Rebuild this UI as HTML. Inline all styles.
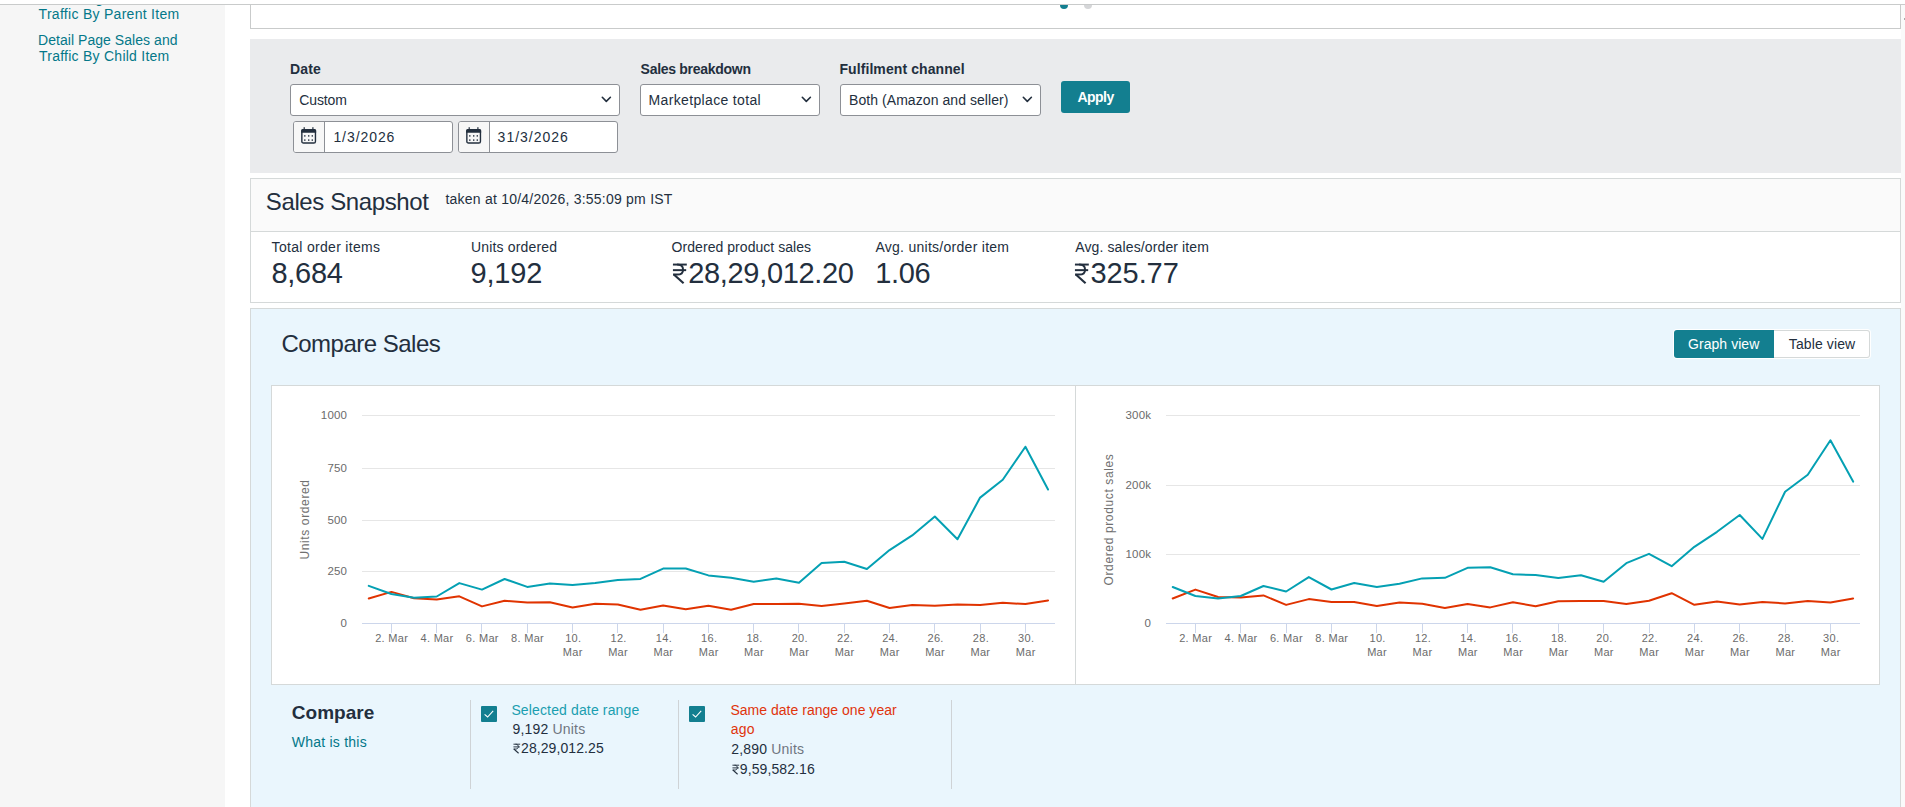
<!DOCTYPE html>
<html><head><meta charset="utf-8"><style>
*{margin:0;padding:0;box-sizing:border-box}
html,body{width:1905px;height:807px;overflow:hidden;background:#fff;font-family:"Liberation Sans",sans-serif;color:#232f3e}
.a{position:absolute}
.t{position:absolute;white-space:nowrap}
.yl{font-family:"Liberation Sans",sans-serif;font-size:11.5px;fill:#6b6b6b;letter-spacing:0.2px}
.xl{font-family:"Liberation Sans",sans-serif;font-size:11px;fill:#6b6b6b;letter-spacing:0.3px}
.yt{font-family:"Liberation Sans",sans-serif;font-size:12px;fill:#707070;letter-spacing:0.63px}
.rp{display:inline-block}
</style></head><body>

<div class="a" style="left:0;top:5px;width:225px;height:802px;background:#f6f6f6;overflow:hidden">
<div class="t" style="left:38.00px;top:-14.25px;font-size:14px;line-height:14px;color:#047889;letter-spacing:0.050px">Detail Page Sales and</div>
<div class="t" style="left:38.60px;top:1.75px;font-size:14px;line-height:14px;color:#047889;letter-spacing:0.286px">Traffic By Parent Item</div>
<div class="t" style="left:38.00px;top:27.85px;font-size:14px;line-height:14px;color:#047889;letter-spacing:0.050px">Detail Page Sales and</div>
<div class="t" style="left:39.00px;top:43.85px;font-size:14px;line-height:14px;color:#047889;letter-spacing:0.250px">Traffic By Child Item</div>
</div>
<div class="a" style="left:0;top:4px;width:1905px;height:1px;background:#c9cbcb"></div>
<div class="a" style="left:1901px;top:5px;width:4px;height:802px;background:#fafafa"></div>
<div class="a" style="left:1904px;top:18px;width:1px;height:2px;background:#aaa"></div>
<div class="a" style="left:250px;top:5px;width:1651px;height:24px;background:#fff;border:1px solid #c9cbcb;border-top:none;overflow:hidden">
<div class="a" style="left:809px;top:-4px;width:8px;height:8px;border-radius:50%;background:#137f90"></div>
<div class="a" style="left:833px;top:-4px;width:8px;height:8px;border-radius:50%;background:#d5d6d8"></div>
</div>
<div class="a" style="left:250px;top:39px;width:1651px;height:134px;background:#eaebed"></div>
<div class="t" style="left:290.00px;top:62.15px;font-size:14px;line-height:14px;font-weight:bold;letter-spacing:0.167px">Date</div>
<div class="t" style="left:640.60px;top:62.15px;font-size:14px;line-height:14px;font-weight:bold;letter-spacing:-0.286px">Sales breakdown</div>
<div class="t" style="left:839.40px;top:62.15px;font-size:14px;line-height:14px;font-weight:bold;letter-spacing:0.088px">Fulfilment channel</div>
<div class="a" style="left:290px;top:84px;width:330px;height:32px;background:#fff;border:1px solid #8d9096;border-radius:3px"></div>
<div class="a" style="left:640px;top:84px;width:180px;height:32px;background:#fff;border:1px solid #8d9096;border-radius:3px"></div>
<div class="a" style="left:840px;top:84px;width:201px;height:32px;background:#fff;border:1px solid #8d9096;border-radius:3px"></div>
<div class="t" style="left:299.20px;top:93.15px;font-size:14px;line-height:14px;;letter-spacing:-0.100px">Custom</div>
<div class="t" style="left:648.60px;top:93.15px;font-size:14px;line-height:14px;;letter-spacing:0.344px">Marketplace total</div>
<div class="t" style="left:849.00px;top:93.15px;font-size:14px;line-height:14px;;letter-spacing:0.065px">Both (Amazon and seller)</div>
<svg style="position:absolute;left:600.5px;top:95.5px" width="11" height="7" viewBox="0 0 11 7"><path d="M1.3,1.3 L5.3,5.4 L9.4,1.3" fill="none" stroke="#232f3e" stroke-width="1.6" stroke-linecap="round" stroke-linejoin="round"/></svg>
<svg style="position:absolute;left:800.5px;top:95.5px" width="11" height="7" viewBox="0 0 11 7"><path d="M1.3,1.3 L5.3,5.4 L9.4,1.3" fill="none" stroke="#232f3e" stroke-width="1.6" stroke-linecap="round" stroke-linejoin="round"/></svg>
<svg style="position:absolute;left:1021.5px;top:95.5px" width="11" height="7" viewBox="0 0 11 7"><path d="M1.3,1.3 L5.3,5.4 L9.4,1.3" fill="none" stroke="#232f3e" stroke-width="1.6" stroke-linecap="round" stroke-linejoin="round"/></svg>
<div class="a" style="left:293px;top:121px;width:160px;height:32px;background:#fff;border:1px solid #8d9096;border-radius:3px;overflow:hidden"><div class="a" style="left:0;top:0;width:31px;height:30px;background:#f7f7f7;border-right:1px solid #8d9096"></div></div>
<div class="a" style="left:458px;top:121px;width:160px;height:32px;background:#fff;border:1px solid #8d9096;border-radius:3px;overflow:hidden"><div class="a" style="left:0;top:0;width:31px;height:30px;background:#f7f7f7;border-right:1px solid #8d9096"></div></div>
<svg style="position:absolute;left:301px;top:127px" width="16" height="17" viewBox="0 0 16 17"><rect x="0.85" y="2.6" width="13.6" height="13.4" rx="1.6" fill="none" stroke="#232f3e" stroke-width="1.4"/><path d="M0.15,5.8 V3.6 Q0.15,1.9 1.9,1.9 H13.4 Q15.15,1.9 15.15,3.6 V5.8 Z" fill="#232f3e"/><rect x="2.6" y="0.2" width="1.2" height="2.4" fill="#232f3e"/><rect x="11.3" y="0.2" width="1.2" height="2.4" fill="#232f3e"/><g fill="#232f3e"><rect x="3.1" y="8.2" width="1.4" height="1.4"/><rect x="7.0" y="8.2" width="1.4" height="1.4"/><rect x="10.6" y="8.2" width="1.4" height="1.4"/><rect x="3.1" y="12.4" width="1.4" height="1.4"/><rect x="7.0" y="12.4" width="1.4" height="1.4"/><rect x="10.6" y="12.4" width="1.4" height="1.4"/></g></svg>
<svg style="position:absolute;left:466px;top:127px" width="16" height="17" viewBox="0 0 16 17"><rect x="0.85" y="2.6" width="13.6" height="13.4" rx="1.6" fill="none" stroke="#232f3e" stroke-width="1.4"/><path d="M0.15,5.8 V3.6 Q0.15,1.9 1.9,1.9 H13.4 Q15.15,1.9 15.15,3.6 V5.8 Z" fill="#232f3e"/><rect x="2.6" y="0.2" width="1.2" height="2.4" fill="#232f3e"/><rect x="11.3" y="0.2" width="1.2" height="2.4" fill="#232f3e"/><g fill="#232f3e"><rect x="3.1" y="8.2" width="1.4" height="1.4"/><rect x="7.0" y="8.2" width="1.4" height="1.4"/><rect x="10.6" y="8.2" width="1.4" height="1.4"/><rect x="3.1" y="12.4" width="1.4" height="1.4"/><rect x="7.0" y="12.4" width="1.4" height="1.4"/><rect x="10.6" y="12.4" width="1.4" height="1.4"/></g></svg>
<div class="t" style="left:333.40px;top:130.15px;font-size:14px;line-height:14px;;letter-spacing:0.929px">1/3/2026</div>
<div class="t" style="left:497.60px;top:130.15px;font-size:14px;line-height:14px;;letter-spacing:1.000px">31/3/2026</div>
<div class="a" style="left:1061px;top:81px;width:69px;height:32px;background:#137f90;border-radius:3px"></div>
<div class="t" style="left:1077.40px;top:90.35px;font-size:14px;line-height:14px;font-weight:bold;color:#fff;letter-spacing:-0.500px">Apply</div>
<div class="a" style="left:250px;top:178px;width:1651px;height:125px;background:#fff;border:1px solid #d5d9d9"></div>
<div class="a" style="left:251px;top:179px;width:1649px;height:53px;background:#fafafa;border-bottom:1px solid #d5d9d9"></div>
<div class="t" style="left:265.80px;top:189.68px;font-size:24px;line-height:24px;;letter-spacing:-0.385px">Sales Snapshot</div>
<div class="t" style="left:445.40px;top:192.35px;font-size:14px;line-height:14px;;letter-spacing:0.227px">taken at 10/4/2026, 3:55:09 pm IST</div>
<div class="t" style="left:271.60px;top:240.05px;font-size:14px;line-height:14px;;letter-spacing:0.312px">Total order items</div>
<div class="t" style="left:471.00px;top:240.05px;font-size:14px;line-height:14px;;letter-spacing:0.167px">Units ordered</div>
<div class="t" style="left:671.60px;top:240.05px;font-size:14px;line-height:14px;;letter-spacing:0.050px">Ordered product sales</div>
<div class="t" style="left:875.40px;top:240.05px;font-size:14px;line-height:14px;;letter-spacing:0.275px">Avg. units/order item</div>
<div class="t" style="left:1075.20px;top:240.05px;font-size:14px;line-height:14px;;letter-spacing:0.125px">Avg. sales/order item</div>
<div class="t" style="left:271.40px;top:258.65px;font-size:29px;line-height:29px;;letter-spacing:-0.250px">8,684</div>
<div class="t" style="left:470.40px;top:258.65px;font-size:29px;line-height:29px;;letter-spacing:-0.125px">9,192</div>
<div class="t" style="left:671.60px;top:258.65px;font-size:29px;line-height:29px;;letter-spacing:-0.318px"><svg class="rp" width="16.57" height="29.00" viewBox="0 -22 16 28" style="vertical-align:-6.21px"><g fill="none" stroke="#232f3e" stroke-width="1.9"><path d="M0.9,-17.6H14.3"/><path d="M0.9,-12.2H13.7"/><path d="M5.0,-17.6C9.1,-17.6 10.7,-15.4 10.7,-12.6C10.7,-9.6 8.5,-7.9 5.1,-7.9H1.0"/><path d="M1.8,-8.0L11.2,0.5" stroke-width="2.1"/></g></svg>28,29,012.20</div>
<div class="t" style="left:875.20px;top:258.65px;font-size:29px;line-height:29px;;letter-spacing:-0.333px">1.06</div>
<div class="t" style="left:1074.00px;top:258.65px;font-size:29px;line-height:29px;;letter-spacing:-0.100px"><svg class="rp" width="16.57" height="29.00" viewBox="0 -22 16 28" style="vertical-align:-6.21px"><g fill="none" stroke="#232f3e" stroke-width="1.9"><path d="M0.9,-17.6H14.3"/><path d="M0.9,-12.2H13.7"/><path d="M5.0,-17.6C9.1,-17.6 10.7,-15.4 10.7,-12.6C10.7,-9.6 8.5,-7.9 5.1,-7.9H1.0"/><path d="M1.8,-8.0L11.2,0.5" stroke-width="2.1"/></g></svg>325.77</div>
<div class="a" style="left:250px;top:308px;width:1651px;height:520px;background:#eaf6fd;border:1px solid #d5d9d9"></div>
<div class="t" style="left:281.40px;top:331.68px;font-size:24px;line-height:24px;;letter-spacing:-0.500px">Compare Sales</div>
<div class="a" style="left:1673px;top:329px;width:198px;height:30px;background:#fff;border-radius:4px"></div>
<div class="a" style="left:1674px;top:330px;width:100px;height:28px;background:#137f90;border-radius:3px 0 0 3px"></div>
<div class="a" style="left:1774px;top:330px;width:96px;height:28px;background:#fff;border:1px solid #d5d9d9;border-left:none;border-radius:0 3px 3px 0"></div>
<div class="t" style="left:1688.00px;top:336.95px;font-size:14px;line-height:14px;color:#fff;letter-spacing:0.056px">Graph view</div>
<div class="t" style="left:1788.80px;top:337.05px;font-size:14px;line-height:14px;;letter-spacing:0.111px">Table view</div>
<div class="a" style="left:271px;top:385px;width:1609px;height:300px;background:#fff;border:1px solid #d5d9d9"></div>
<div class="a" style="left:1075px;top:386px;width:1px;height:298px;background:#d5d9d9"></div>
<svg class="a" style="left:0;top:0" width="1905" height="807" viewBox="0 0 1905 807">
<line x1="362" y1="415.5" x2="1055" y2="415.5" stroke="#e6e6e6" stroke-width="1"/>
<line x1="362" y1="468.5" x2="1055" y2="468.5" stroke="#e6e6e6" stroke-width="1"/>
<line x1="362" y1="520.5" x2="1055" y2="520.5" stroke="#e6e6e6" stroke-width="1"/>
<line x1="362" y1="571.5" x2="1055" y2="571.5" stroke="#e6e6e6" stroke-width="1"/>
<line x1="362" y1="623.5" x2="1055" y2="623.5" stroke="#ccd6eb" stroke-width="1"/>
<line x1="391.5" y1="623" x2="391.5" y2="633" stroke="#ccd6eb" stroke-width="1"/>
<line x1="436.5" y1="623" x2="436.5" y2="633" stroke="#ccd6eb" stroke-width="1"/>
<line x1="481.5" y1="623" x2="481.5" y2="633" stroke="#ccd6eb" stroke-width="1"/>
<line x1="527.5" y1="623" x2="527.5" y2="633" stroke="#ccd6eb" stroke-width="1"/>
<line x1="572.5" y1="623" x2="572.5" y2="633" stroke="#ccd6eb" stroke-width="1"/>
<line x1="617.5" y1="623" x2="617.5" y2="633" stroke="#ccd6eb" stroke-width="1"/>
<line x1="663.5" y1="623" x2="663.5" y2="633" stroke="#ccd6eb" stroke-width="1"/>
<line x1="708.5" y1="623" x2="708.5" y2="633" stroke="#ccd6eb" stroke-width="1"/>
<line x1="753.5" y1="623" x2="753.5" y2="633" stroke="#ccd6eb" stroke-width="1"/>
<line x1="798.5" y1="623" x2="798.5" y2="633" stroke="#ccd6eb" stroke-width="1"/>
<line x1="844.5" y1="623" x2="844.5" y2="633" stroke="#ccd6eb" stroke-width="1"/>
<line x1="889.5" y1="623" x2="889.5" y2="633" stroke="#ccd6eb" stroke-width="1"/>
<line x1="934.5" y1="623" x2="934.5" y2="633" stroke="#ccd6eb" stroke-width="1"/>
<line x1="980.5" y1="623" x2="980.5" y2="633" stroke="#ccd6eb" stroke-width="1"/>
<line x1="1025.5" y1="623" x2="1025.5" y2="633" stroke="#ccd6eb" stroke-width="1"/>
<text x="347.2" y="418.6" text-anchor="end" class="yl">1000</text>
<text x="347.2" y="471.6" text-anchor="end" class="yl">750</text>
<text x="347.2" y="523.6" text-anchor="end" class="yl">500</text>
<text x="347.2" y="574.6" text-anchor="end" class="yl">250</text>
<text x="347.2" y="626.6" text-anchor="end" class="yl">0</text>
<text x="391.7" y="642" text-anchor="middle" class="xl">2. Mar</text>
<text x="437.0" y="642" text-anchor="middle" class="xl">4. Mar</text>
<text x="482.3" y="642" text-anchor="middle" class="xl">6. Mar</text>
<text x="527.6" y="642" text-anchor="middle" class="xl">8. Mar</text>
<text x="573.3" y="642" text-anchor="middle" class="xl">10.</text>
<text x="572.8" y="656" text-anchor="middle" class="xl">Mar</text>
<text x="618.6" y="642" text-anchor="middle" class="xl">12.</text>
<text x="618.1" y="656" text-anchor="middle" class="xl">Mar</text>
<text x="663.9" y="642" text-anchor="middle" class="xl">14.</text>
<text x="663.4" y="656" text-anchor="middle" class="xl">Mar</text>
<text x="709.2" y="642" text-anchor="middle" class="xl">16.</text>
<text x="708.7" y="656" text-anchor="middle" class="xl">Mar</text>
<text x="754.5" y="642" text-anchor="middle" class="xl">18.</text>
<text x="754.0" y="656" text-anchor="middle" class="xl">Mar</text>
<text x="799.8" y="642" text-anchor="middle" class="xl">20.</text>
<text x="799.3" y="656" text-anchor="middle" class="xl">Mar</text>
<text x="845.1" y="642" text-anchor="middle" class="xl">22.</text>
<text x="844.6" y="656" text-anchor="middle" class="xl">Mar</text>
<text x="890.3" y="642" text-anchor="middle" class="xl">24.</text>
<text x="889.8" y="656" text-anchor="middle" class="xl">Mar</text>
<text x="935.6" y="642" text-anchor="middle" class="xl">26.</text>
<text x="935.1" y="656" text-anchor="middle" class="xl">Mar</text>
<text x="980.9" y="642" text-anchor="middle" class="xl">28.</text>
<text x="980.4" y="656" text-anchor="middle" class="xl">Mar</text>
<text x="1026.2" y="642" text-anchor="middle" class="xl">30.</text>
<text x="1025.7" y="656" text-anchor="middle" class="xl">Mar</text>
<text x="0" y="4" text-anchor="middle" class="yt" transform="translate(304.6 519.5) rotate(-90)">Units ordered</text>
<polyline points="368.76,598.5 391.40,591.9 414.05,598.2 436.69,599.5 459.33,596.3 481.98,606.4 504.62,600.7 527.26,602.6 549.90,602.3 572.55,607.5 595.19,603.8 617.83,604.6 640.48,609.7 663.12,605.5 685.76,609.2 708.40,605.8 731.05,609.7 753.69,604.0 776.33,604.0 798.98,603.8 821.62,606.0 844.26,603.6 866.91,600.7 889.55,608.0 912.19,604.9 934.84,605.8 957.48,604.6 980.12,605.1 1002.76,602.7 1025.41,604.1 1048.05,600.4" fill="none" stroke="#e03300" stroke-width="2" stroke-linejoin="round" stroke-linecap="round"/>
<polyline points="368.76,585.9 391.40,594.0 414.05,597.8 436.69,596.5 459.33,583.1 481.98,589.6 504.62,579.0 527.26,586.9 549.90,583.4 572.55,584.9 595.19,583.0 617.83,580.1 640.48,578.9 663.12,568.6 685.76,568.5 708.40,575.4 731.05,577.8 753.69,581.7 776.33,578.4 798.98,582.7 821.62,563.0 844.26,561.7 866.91,569.0 889.55,550.1 912.19,535.4 934.84,516.5 957.48,539.3 980.12,497.6 1002.76,479.8 1025.41,446.7 1048.05,489.5" fill="none" stroke="#04a0b3" stroke-width="2" stroke-linejoin="round" stroke-linecap="round"/>
<line x1="1166" y1="415.5" x2="1860" y2="415.5" stroke="#e6e6e6" stroke-width="1"/>
<line x1="1166" y1="485.5" x2="1860" y2="485.5" stroke="#e6e6e6" stroke-width="1"/>
<line x1="1166" y1="554.5" x2="1860" y2="554.5" stroke="#e6e6e6" stroke-width="1"/>
<line x1="1166" y1="623.5" x2="1860" y2="623.5" stroke="#ccd6eb" stroke-width="1"/>
<line x1="1195.5" y1="623" x2="1195.5" y2="633" stroke="#ccd6eb" stroke-width="1"/>
<line x1="1240.5" y1="623" x2="1240.5" y2="633" stroke="#ccd6eb" stroke-width="1"/>
<line x1="1286.5" y1="623" x2="1286.5" y2="633" stroke="#ccd6eb" stroke-width="1"/>
<line x1="1331.5" y1="623" x2="1331.5" y2="633" stroke="#ccd6eb" stroke-width="1"/>
<line x1="1376.5" y1="623" x2="1376.5" y2="633" stroke="#ccd6eb" stroke-width="1"/>
<line x1="1422.5" y1="623" x2="1422.5" y2="633" stroke="#ccd6eb" stroke-width="1"/>
<line x1="1467.5" y1="623" x2="1467.5" y2="633" stroke="#ccd6eb" stroke-width="1"/>
<line x1="1512.5" y1="623" x2="1512.5" y2="633" stroke="#ccd6eb" stroke-width="1"/>
<line x1="1558.5" y1="623" x2="1558.5" y2="633" stroke="#ccd6eb" stroke-width="1"/>
<line x1="1603.5" y1="623" x2="1603.5" y2="633" stroke="#ccd6eb" stroke-width="1"/>
<line x1="1649.5" y1="623" x2="1649.5" y2="633" stroke="#ccd6eb" stroke-width="1"/>
<line x1="1694.5" y1="623" x2="1694.5" y2="633" stroke="#ccd6eb" stroke-width="1"/>
<line x1="1739.5" y1="623" x2="1739.5" y2="633" stroke="#ccd6eb" stroke-width="1"/>
<line x1="1785.5" y1="623" x2="1785.5" y2="633" stroke="#ccd6eb" stroke-width="1"/>
<line x1="1830.5" y1="623" x2="1830.5" y2="633" stroke="#ccd6eb" stroke-width="1"/>
<text x="1151.2" y="418.6" text-anchor="end" class="yl">300k</text>
<text x="1151.2" y="488.6" text-anchor="end" class="yl">200k</text>
<text x="1151.2" y="557.6" text-anchor="end" class="yl">100k</text>
<text x="1151.2" y="626.6" text-anchor="end" class="yl">0</text>
<text x="1195.7" y="642" text-anchor="middle" class="xl">2. Mar</text>
<text x="1241.1" y="642" text-anchor="middle" class="xl">4. Mar</text>
<text x="1286.4" y="642" text-anchor="middle" class="xl">6. Mar</text>
<text x="1331.8" y="642" text-anchor="middle" class="xl">8. Mar</text>
<text x="1377.6" y="642" text-anchor="middle" class="xl">10.</text>
<text x="1377.1" y="656" text-anchor="middle" class="xl">Mar</text>
<text x="1423.0" y="642" text-anchor="middle" class="xl">12.</text>
<text x="1422.5" y="656" text-anchor="middle" class="xl">Mar</text>
<text x="1468.4" y="642" text-anchor="middle" class="xl">14.</text>
<text x="1467.9" y="656" text-anchor="middle" class="xl">Mar</text>
<text x="1513.7" y="642" text-anchor="middle" class="xl">16.</text>
<text x="1513.2" y="656" text-anchor="middle" class="xl">Mar</text>
<text x="1559.1" y="642" text-anchor="middle" class="xl">18.</text>
<text x="1558.6" y="656" text-anchor="middle" class="xl">Mar</text>
<text x="1604.4" y="642" text-anchor="middle" class="xl">20.</text>
<text x="1603.9" y="656" text-anchor="middle" class="xl">Mar</text>
<text x="1649.8" y="642" text-anchor="middle" class="xl">22.</text>
<text x="1649.3" y="656" text-anchor="middle" class="xl">Mar</text>
<text x="1695.2" y="642" text-anchor="middle" class="xl">24.</text>
<text x="1694.7" y="656" text-anchor="middle" class="xl">Mar</text>
<text x="1740.5" y="642" text-anchor="middle" class="xl">26.</text>
<text x="1740.0" y="656" text-anchor="middle" class="xl">Mar</text>
<text x="1785.9" y="642" text-anchor="middle" class="xl">28.</text>
<text x="1785.4" y="656" text-anchor="middle" class="xl">Mar</text>
<text x="1831.2" y="642" text-anchor="middle" class="xl">30.</text>
<text x="1830.7" y="656" text-anchor="middle" class="xl">Mar</text>
<text x="0" y="4" text-anchor="middle" class="yt" transform="translate(1108.6 519.5) rotate(-90)">Ordered product sales</text>
<polyline points="1172.72,598.5 1195.40,589.6 1218.08,597.0 1240.76,597.6 1263.44,595.4 1286.12,604.9 1308.80,599.1 1331.48,602.0 1354.16,601.9 1376.84,605.9 1399.52,602.5 1422.20,603.8 1444.88,608.0 1467.56,603.9 1490.24,607.4 1512.92,602.2 1535.60,606.2 1558.28,601.2 1580.96,601.0 1603.64,601.1 1626.32,604.1 1649.00,600.8 1671.68,593.2 1694.36,604.8 1717.04,601.6 1739.72,604.6 1762.40,602.1 1785.08,603.4 1807.76,600.9 1830.44,602.6 1853.12,598.4" fill="none" stroke="#e03300" stroke-width="2" stroke-linejoin="round" stroke-linecap="round"/>
<polyline points="1172.72,587.0 1195.40,596.0 1218.08,598.6 1240.76,596.0 1263.44,586.0 1286.12,591.5 1308.80,577.1 1331.48,589.5 1354.16,583.0 1376.84,587.1 1399.52,583.7 1422.20,578.4 1444.88,577.8 1467.56,567.8 1490.24,567.3 1512.92,574.3 1535.60,575.0 1558.28,577.9 1580.96,575.3 1603.64,581.8 1626.32,563.2 1649.00,553.8 1671.68,566.2 1694.36,546.8 1717.04,531.8 1739.72,515.0 1762.40,538.9 1785.08,491.7 1807.76,474.7 1830.44,440.3 1853.12,481.6" fill="none" stroke="#04a0b3" stroke-width="2" stroke-linejoin="round" stroke-linecap="round"/>
</svg>
<div class="t" style="left:291.80px;top:702.52px;font-size:19px;line-height:19px;font-weight:bold;letter-spacing:0.033px">Compare</div>
<div class="t" style="left:291.80px;top:735.05px;font-size:14px;line-height:14px;color:#047889;letter-spacing:0.227px">What is this</div>
<div class="a" style="left:470px;top:700px;width:1px;height:89px;background:#cfd3d6"></div>
<div class="a" style="left:678px;top:700px;width:1px;height:89px;background:#cfd3d6"></div>
<div class="a" style="left:951px;top:700px;width:1px;height:89px;background:#cfd3d6"></div>
<div style="position:absolute;left:481px;top:706px;width:16px;height:16px;background:#137f90;border-radius:1px"><svg width="16" height="16" viewBox="0 0 16 16"><path d="M3.6,8.3 L6.6,11 L12.2,4.9" fill="none" stroke="#fff" stroke-width="1.1"/></svg></div>
<div style="position:absolute;left:689px;top:706px;width:16px;height:16px;background:#137f90;border-radius:1px"><svg width="16" height="16" viewBox="0 0 16 16"><path d="M3.6,8.3 L6.6,11 L12.2,4.9" fill="none" stroke="#fff" stroke-width="1.1"/></svg></div>
<div class="t" style="left:511.40px;top:702.95px;font-size:14px;line-height:14px;color:#1a9eb0;letter-spacing:0.139px">Selected date range</div>
<div class="t" style="left:512.40px;top:721.75px;font-size:14px;line-height:14px;;letter-spacing:0.200px">9,192 <span style="color:#6f7580">Units</span></div>
<div class="t" style="left:513.00px;top:741.45px;font-size:14px;line-height:14px;;letter-spacing:0.091px"><svg class="rp" width="8.00" height="14.00" viewBox="0 -22 16 28" style="vertical-align:-3.00px"><g fill="none" stroke="#232f3e" stroke-width="1.9"><path d="M0.9,-17.6H14.3"/><path d="M0.9,-12.2H13.7"/><path d="M5.0,-17.6C9.1,-17.6 10.7,-15.4 10.7,-12.6C10.7,-9.6 8.5,-7.9 5.1,-7.9H1.0"/><path d="M1.8,-8.0L11.2,0.5" stroke-width="2.1"/></g></svg>28,29,012.25</div>
<div class="t" style="left:730.40px;top:702.95px;font-size:14px;line-height:14px;color:#e0340c;letter-spacing:0.022px">Same date range one year</div>
<div class="t" style="left:730.80px;top:722.05px;font-size:14px;line-height:14px;color:#e0340c;letter-spacing:0.250px">ago</div>
<div class="t" style="left:731.20px;top:742.15px;font-size:14px;line-height:14px;;letter-spacing:0.200px">2,890 <span style="color:#6f7580">Units</span></div>
<div class="t" style="left:731.80px;top:761.85px;font-size:14px;line-height:14px;;letter-spacing:0.100px"><svg class="rp" width="8.00" height="14.00" viewBox="0 -22 16 28" style="vertical-align:-3.00px"><g fill="none" stroke="#232f3e" stroke-width="1.9"><path d="M0.9,-17.6H14.3"/><path d="M0.9,-12.2H13.7"/><path d="M5.0,-17.6C9.1,-17.6 10.7,-15.4 10.7,-12.6C10.7,-9.6 8.5,-7.9 5.1,-7.9H1.0"/><path d="M1.8,-8.0L11.2,0.5" stroke-width="2.1"/></g></svg>9,59,582.16</div>
</body></html>
